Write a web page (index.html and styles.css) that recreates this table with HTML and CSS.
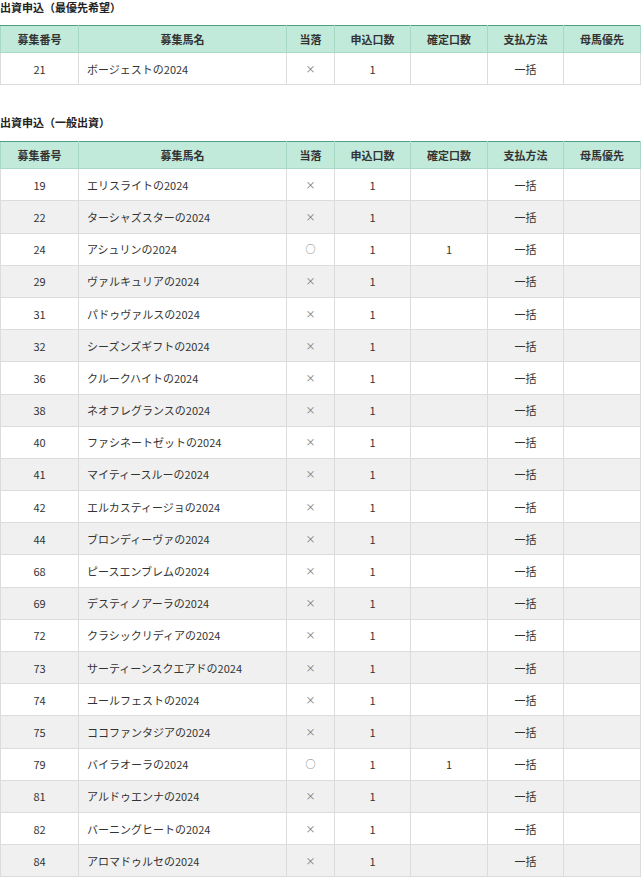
FILE: index.html
```html
<!DOCTYPE html>
<html lang="ja">
<head>
<meta charset="utf-8">
<link rel="stylesheet" href="styles.css">
</head>
<body>
<section class="block first">
  <h2 class="title">出資申込（最優先希望）</h2>
  <table class="apply">
    <colgroup>
      <col class="c-no"><col class="c-name"><col class="c-res"><col class="c-num"><col class="c-fix"><col class="c-pay"><col class="c-mare">
    </colgroup>
    <thead>
      <tr><th>募集番号</th><th>募集馬名</th><th>当落</th><th>申込口数</th><th>確定口数</th><th>支払方法</th><th>母馬優先</th></tr>
    </thead>
    <tbody>
      <tr><td>21</td><td class="name">ボージェストの2024</td><td class="mark">×</td><td>1</td><td></td><td>一括</td><td></td></tr>
    </tbody>
  </table>
</section>
<section class="block second">
  <h2 class="title">出資申込（一般出資）</h2>
  <table class="apply">
    <colgroup>
      <col class="c-no"><col class="c-name"><col class="c-res"><col class="c-num"><col class="c-fix"><col class="c-pay"><col class="c-mare">
    </colgroup>
    <thead>
      <tr><th>募集番号</th><th>募集馬名</th><th>当落</th><th>申込口数</th><th>確定口数</th><th>支払方法</th><th>母馬優先</th></tr>
    </thead>
    <tbody>
      <tr><td>19</td><td class="name">エリスライトの2024</td><td class="mark">×</td><td>1</td><td></td><td>一括</td><td></td></tr>
      <tr><td>22</td><td class="name">ターシャズスターの2024</td><td class="mark">×</td><td>1</td><td></td><td>一括</td><td></td></tr>
      <tr><td>24</td><td class="name">アシュリンの2024</td><td class="mark">○</td><td>1</td><td>1</td><td>一括</td><td></td></tr>
      <tr><td>29</td><td class="name">ヴァルキュリアの2024</td><td class="mark">×</td><td>1</td><td></td><td>一括</td><td></td></tr>
      <tr><td>31</td><td class="name">パドゥヴァルスの2024</td><td class="mark">×</td><td>1</td><td></td><td>一括</td><td></td></tr>
      <tr><td>32</td><td class="name">シーズンズギフトの2024</td><td class="mark">×</td><td>1</td><td></td><td>一括</td><td></td></tr>
      <tr><td>36</td><td class="name">クルークハイトの2024</td><td class="mark">×</td><td>1</td><td></td><td>一括</td><td></td></tr>
      <tr><td>38</td><td class="name">ネオフレグランスの2024</td><td class="mark">×</td><td>1</td><td></td><td>一括</td><td></td></tr>
      <tr><td>40</td><td class="name">ファシネートゼットの2024</td><td class="mark">×</td><td>1</td><td></td><td>一括</td><td></td></tr>
      <tr><td>41</td><td class="name">マイティースルーの2024</td><td class="mark">×</td><td>1</td><td></td><td>一括</td><td></td></tr>
      <tr><td>42</td><td class="name">エルカスティージョの2024</td><td class="mark">×</td><td>1</td><td></td><td>一括</td><td></td></tr>
      <tr><td>44</td><td class="name">ブロンディーヴァの2024</td><td class="mark">×</td><td>1</td><td></td><td>一括</td><td></td></tr>
      <tr><td>68</td><td class="name">ピースエンブレムの2024</td><td class="mark">×</td><td>1</td><td></td><td>一括</td><td></td></tr>
      <tr><td>69</td><td class="name">デスティノアーラの2024</td><td class="mark">×</td><td>1</td><td></td><td>一括</td><td></td></tr>
      <tr><td>72</td><td class="name">クラシックリディアの2024</td><td class="mark">×</td><td>1</td><td></td><td>一括</td><td></td></tr>
      <tr><td>73</td><td class="name">サーティーンスクエアドの2024</td><td class="mark">×</td><td>1</td><td></td><td>一括</td><td></td></tr>
      <tr><td>74</td><td class="name">ユールフェストの2024</td><td class="mark">×</td><td>1</td><td></td><td>一括</td><td></td></tr>
      <tr><td>75</td><td class="name">ココファンタジアの2024</td><td class="mark">×</td><td>1</td><td></td><td>一括</td><td></td></tr>
      <tr><td>79</td><td class="name">バイラオーラの2024</td><td class="mark">○</td><td>1</td><td>1</td><td>一括</td><td></td></tr>
      <tr><td>81</td><td class="name">アルドゥエンナの2024</td><td class="mark">×</td><td>1</td><td></td><td>一括</td><td></td></tr>
      <tr><td>82</td><td class="name">バーニングヒートの2024</td><td class="mark">×</td><td>1</td><td></td><td>一括</td><td></td></tr>
      <tr><td>84</td><td class="name">アロマドゥルセの2024</td><td class="mark">×</td><td>1</td><td></td><td>一括</td><td></td></tr>
    </tbody>
  </table>
</section>
</body>
</html>
```
FILE: styles.css
```css
html, body {
  margin: 0;
  padding: 0;
  background: #fff;
}
body {
  font-family: "Noto Sans CJK JP", "Noto Sans", sans-serif;
  font-size: 11px;
  color: #333;
}
.block.second {
  margin-top: 30px;
}
.title {
  margin: 0 0 11px;
  font-size: 11px;
  line-height: 14px;
  font-weight: bold;
  color: #222;
}
.second .title {
  margin-bottom: 12px;
}
.apply {
  width: 640px;
  border-collapse: collapse;
  table-layout: fixed;
}
.c-no { width: 78px; }
.c-name { width: 208px; }
.c-res { width: 48px; }
.c-num { width: 76px; }
.c-fix { width: 77px; }
.c-pay { width: 76px; }
.c-mare { width: 77px; }
.apply th {
  height: 27px;
  padding: 0 4px;
  box-sizing: border-box;
  background: #c1eadb;
  border: 1px solid #a8d8c6;
  border-top: 1px solid #4f9e82;
  font-weight: bold;
  line-height: 14px;
  color: #333;
  text-align: center;
  vertical-align: middle;
}
.apply td {
  height: 32.2px;
  padding: 0 4px;
  box-sizing: border-box;
  border: 1px solid #dcdcdc;
  line-height: 14px;
  text-align: center;
  vertical-align: middle;
  color: #333;
}
.apply td.name {
  text-align: left;
  padding-left: 8px;
}
.apply td.mark {
  color: #777;
  font-size: 10px;
}
.apply tbody tr:nth-child(even) td {
  background: #f0f0f0;
}
```
